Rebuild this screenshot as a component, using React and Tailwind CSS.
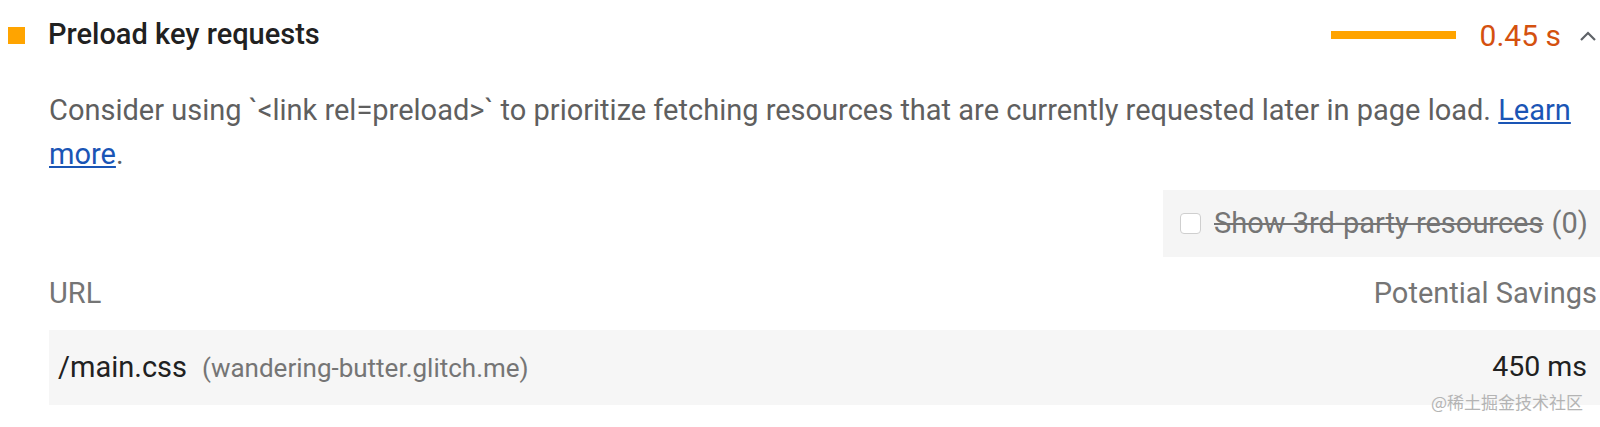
import React from 'react';

function ChevronUp() {
  return (
    <svg width="18" height="12" viewBox="0 0 18 12" className="text-[#5f6368]">
      <path d="M2 10 L9 3 L16 10" fill="none" stroke="currentColor" strokeWidth="2.2" />
    </svg>
  );
}

export default function App() {
  return (
    <div className="relative w-[1600px] h-[427px] bg-white overflow-hidden font-['Roboto',_'Liberation_Sans',_sans-serif]">
      {/* audit header */}
      <div className="flex items-center h-[70px]">
        <div className="w-[17px] h-[17px] bg-[#ffa400] ml-[8px]" />
        <div className="ml-[23px] text-[29px] font-medium text-[#212121] flex-1">Preload key requests</div>
        <div className="w-[125px] h-[8px] bg-[#ffa400]" />
        <div className="ml-[24px] text-[30px] text-[#d4510f]">0.45 s</div>
        <div className="ml-[18px] mr-[3px] mt-[2px]">
          <ChevronUp />
        </div>
      </div>

      {/* description */}
      <div className="pl-[49px] pr-[10px] text-[29px] leading-[44px] text-[#5f5f5f] mt-[18px]">
        Consider using `&lt;link rel=preload&gt;` to prioritize fetching resources that are currently requested later in page load.{' '}
        <a href="#" className="text-[#1a55b5] underline">Learn more</a>.
      </div>

      {/* 3rd party toggle */}
      <div className="flex justify-end mt-[14px]">
        <div className="w-[437px] h-[67px] bg-[#f5f5f5] flex items-center pl-[17px]">
          <div className="w-[21px] h-[21px] rounded-[4px] border-[1.5px] border-[#cfcfcf] bg-white" />
          <span className="ml-[13px] text-[29px] text-[#757575] line-through">Show 3rd-party resources</span>
          <span className="ml-[8px] text-[29px] text-[#757575]">(0)</span>
        </div>
      </div>

      {/* table */}
      <div className="pl-[49px]">
        <div className="flex justify-between items-center h-[73px] text-[29px] text-[#757575]">
          <span>URL</span>
          <span className="pr-[3px]">Potential Savings</span>
        </div>
        <div className="flex items-center justify-between h-[75px] bg-[#f6f6f6] pl-[9px] pr-[13px]">
          <div className="flex items-baseline">
            <span className="text-[29px] text-[#212121]">/main.css</span>
            <span className="ml-[15px] text-[26px] text-[#757575]">(wandering-butter.glitch.me)</span>
          </div>
          <span className="text-[28.5px] text-[#212121]">450 ms</span>
        </div>
      </div>

      <div className="absolute right-[17px] top-[389px] text-[17px] text-[#b4b4b4] font-['Noto_Sans_CJK_SC',_sans-serif]">
        @稀土掘金技术社区
      </div>
    </div>
  );
}
